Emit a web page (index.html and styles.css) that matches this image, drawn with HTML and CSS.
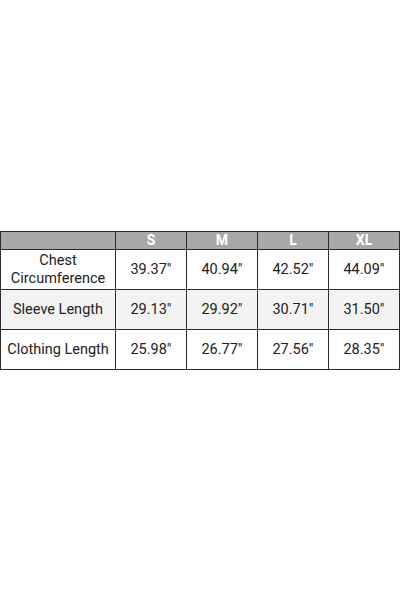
FILE: index.html
```html
<!DOCTYPE html>
<html>
<head>
<meta charset="utf-8">
<link rel="stylesheet" href="styles.css">
</head>
<body>
<div class="page">
<table class="size-table">
  <colgroup>
    <col class="c-label"><col class="c-size"><col class="c-size"><col class="c-size"><col class="c-last">
  </colgroup>
  <thead>
    <tr><th></th><th>S</th><th>M</th><th>L</th><th>XL</th></tr>
  </thead>
  <tbody>
    <tr><td>Chest<br>Circumference</td><td>39.37"</td><td>40.94"</td><td>42.52"</td><td>44.09"</td></tr>
    <tr class="alt"><td>Sleeve Length</td><td>29.13"</td><td>29.92"</td><td>30.71"</td><td>31.50"</td></tr>
    <tr><td>Clothing Length</td><td>25.98"</td><td>26.77"</td><td>27.56"</td><td>28.35"</td></tr>
  </tbody>
</table>
</div>
</body>
</html>
```
FILE: styles.css
```css
html, body {
  margin: 0;
  padding: 0;
  background: #ffffff;
}
.page {
  height: 600px;
  display: flex;
  align-items: center;
  justify-content: flex-start;
}
.size-table {
  width: 399px;
  border-collapse: collapse;
  table-layout: fixed;
  font-family: Roboto, "Liberation Sans", sans-serif;
  font-size: 14.5px;
  color: #222222;
}
.c-label { width: 115px; }
.c-size { width: 71px; }
.c-last { width: 71px; }
.size-table th,
.size-table td {
  border: 1px solid #2b2b2b;
  text-align: center;
  padding: 0;
}
.size-table th {
  background: #a9a7a7;
  color: #ffffff;
  font-weight: 700;
  height: 17px;
  line-height: 17px;
  font-size: 14px;
}
.size-table td {
  height: 37px;
  padding-top: 2px;
  line-height: 18px;
}
.size-table tr.alt td {
  background: #f3f3f3;
}
```
